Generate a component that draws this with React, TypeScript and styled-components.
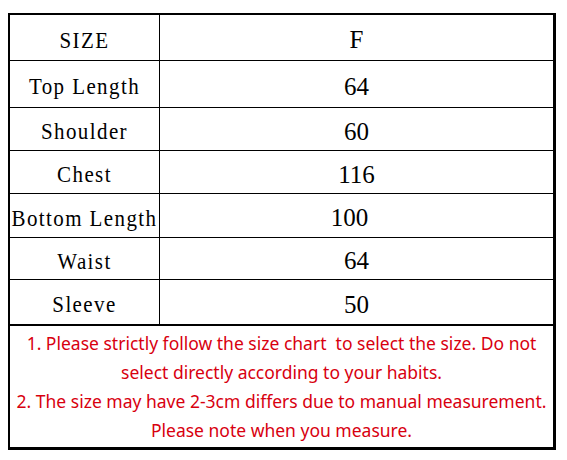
import React from 'react';
import styled, { createGlobalStyle } from 'styled-components';

const GlobalStyle = createGlobalStyle`
  body {
    margin: 0;
    background: #ffffff;
  }
`;

const Page = styled.div`
  padding: 13px 0 0 8px;
`;

const Chart = styled.div`
  width: 548px;
  box-sizing: border-box;
  border-style: solid;
  border-color: #000;
  border-width: 2px 3px 3px 2px;
`;

const Row = styled.div<{ $h: number; $last?: boolean }>`
  display: grid;
  grid-template-columns: 150px 1fr;
  box-sizing: border-box;
  height: ${p => p.$h}px;
  border-bottom: ${p => (p.$last ? 2 : 1)}px solid #000;
`;

const LabelCell = styled.div`
  display: flex;
  align-items: center;
  justify-content: center;
  box-sizing: border-box;
  border-right: 1px solid #000;
  padding-top: 5px;
  white-space: nowrap;
`;

const LabelText = styled.span`
  display: inline-block;
  font-family: 'Liberation Serif', 'Times New Roman', serif;
  font-size: 21px;
  letter-spacing: 1.4px;
  line-height: 1;
  color: #000;
  transform: scaleY(1.1);
`;

const ValueCell = styled.div<{ $shift?: number }>`
  display: flex;
  align-items: center;
  justify-content: center;
  padding-top: 4px;
  padding-right: ${p => p.$shift ?? 0}px;
  font-family: 'Liberation Serif', 'Times New Roman', serif;
  font-size: 25px;
  line-height: 1;
  color: #000;
`;

const Notes = styled.div`
  box-sizing: border-box;
  height: 121px;
  padding: 3px 4px 0;
  text-align: center;
  font-family: 'Noto Sans', 'Open Sans', sans-serif;
  font-size: 17.5px;
  line-height: 29px;
  color: #d8000f;
  white-space: pre-wrap;
`;

const rows = [
  { label: 'SIZE', value: 'F', h: 46 },
  { label: 'Top Length', value: '64', h: 47 },
  { label: 'Shoulder', value: '60', h: 43 },
  { label: 'Chest', value: '116', h: 43 },
  { label: 'Bottom Length', value: '100', h: 44, shift: 14 },
  { label: 'Waist', value: '64', h: 42 },
  { label: 'Sleeve', value: '50', h: 46 },
];

export default function App() {
  return (
    <>
      <GlobalStyle />
      <Page>
        <Chart>
          {rows.map((r, i) => (
            <Row key={r.label} $h={r.h} $last={i === rows.length - 1}>
              <LabelCell>
                <LabelText>{r.label}</LabelText>
              </LabelCell>
              <ValueCell $shift={r.shift}>{r.value}</ValueCell>
            </Row>
          ))}
          <Notes>
            {'1. Please strictly follow the size chart  to select the size. Do not select directly according to your habits.'}
            <br />
            {'2. The size may have 2-3cm differs due to manual measurement. Please note when you measure.'}
          </Notes>
        </Chart>
      </Page>
    </>
  );
}
